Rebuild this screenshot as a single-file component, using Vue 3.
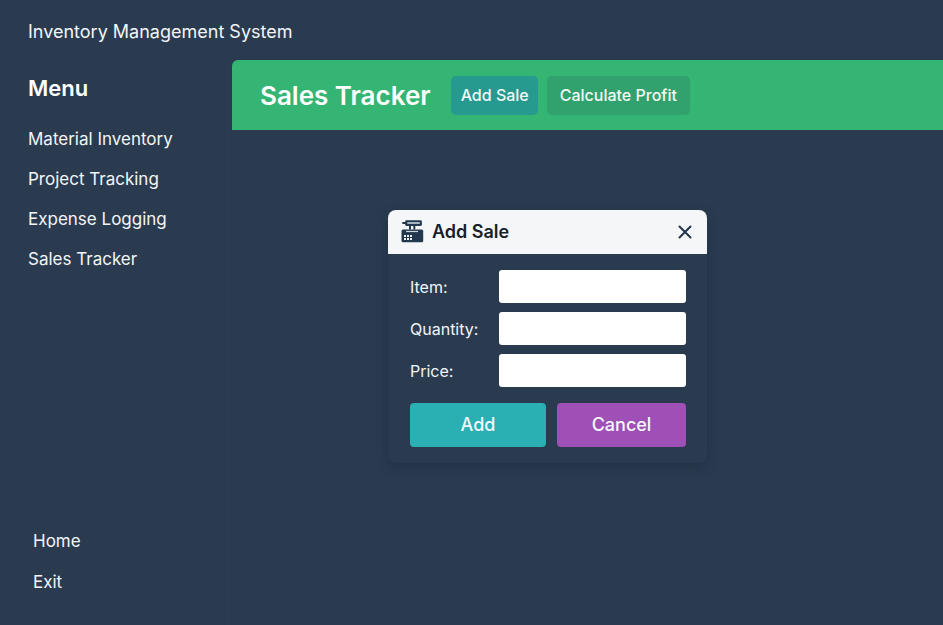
<script setup>
import { ref, reactive } from 'vue'

const menu = ['Material Inventory', 'Project Tracking', 'Expense Logging', 'Sales Tracker']
const footerLinks = ['Home', 'Exit']
const fields = [
  { key: 'item', label: 'Item:', mode: 'text' },
  { key: 'quantity', label: 'Quantity:', mode: 'numeric' },
  { key: 'price', label: 'Price:', mode: 'decimal' },
]
const open = ref(true)
const sale = reactive({ item: '', quantity: '', price: '' })

function close() {
  open.value = false
}
</script>

<template>
  <div class="app">
    <header class="topbar">Inventory Management System</header>
    <div class="shell">
      <aside class="sidebar">
        <h2 class="menu-title">Menu</h2>
        <nav class="menu">
          <a v-for="entry in menu" :key="entry" href="#">{{ entry }}</a>
        </nav>
        <nav class="menu footer-menu">
          <a v-for="entry in footerLinks" :key="entry" href="#">{{ entry }}</a>
        </nav>
      </aside>
      <main class="main">
        <div class="page-head">
          <h1>Sales Tracker</h1>
          <div class="tabs">
            <button type="button" class="tab tab-active" @click="open = true">Add Sale</button>
            <button type="button" class="tab">Calculate Profit</button>
          </div>
        </div>
        <div class="stage">
          <section v-if="open" class="dialog" role="dialog" aria-labelledby="dialog-title">
            <div class="dialog-head">
              <svg class="register" viewBox="0 0 24 24" aria-hidden="true">
                <path d="M3 9.500h18.500q1.700 0 1.700 1.700v9.500q0 1.500-1.500 1.500H3q-1.500 0-1.500-1.500V11Q1.500 9.500 3 9.500z" fill="#22384f" />
                <path d="M6 11.500h12" fill="none" stroke="#cfd7de" stroke-width="1.200" />
                <path d="M9 5.500h2v4H9zM13.300 5.500h2v4h-2z" fill="#22384f" />
                <path d="M2.300 2h2.900V1.500Q5.200.300 6.500.300h14q1.400 0 1.400 1.400v2.900Q21.900 6 20.500 6h-14Q5.200 6 5.200 4.700V4H2.300z" fill="#22384f" />
                <path d="M7.300 2.300h12.500v1.400H7.300z" fill="#dfe5ea" />
                <path d="M4 15h2v2H4zM7 15h2v2H7zM10 15h2v2h-2zM4 18h2v2H4zM7 18h2v2H7zM10 18h2v2h-2z" fill="#eef1f4" />
              </svg>
              <h2 id="dialog-title">Add Sale</h2>
              <button type="button" class="close" aria-label="Close" @click="close">
                <svg viewBox="0 0 14 14" aria-hidden="true">
                  <path d="M1.500 1.500l11 11M12.500 1.500l-11 11" fill="none" stroke="#22364b" stroke-width="2" stroke-linecap="round" />
                </svg>
              </button>
            </div>
            <form class="dialog-body" @submit.prevent="close">
              <div v-for="field in fields" :key="field.key" class="field">
                <label :for="field.key">{{ field.label }}</label>
                <input :id="field.key" v-model="sale[field.key]" type="text" :inputmode="field.mode" />
              </div>
              <div class="actions">
                <button type="submit" class="add">Add</button>
                <button type="button" class="cancel" @click="close">Cancel</button>
              </div>
            </form>
          </section>
        </div>
      </main>
    </div>
  </div>
</template>

<style>
body {
  margin: 0;
  background: #2a3b50;
}
</style>

<style scoped>
.app {
  display: flex;
  flex-direction: column;
  min-height: 100vh;
  background: #2a3b50;
  color: #f3f5f7;
  font-family: Inter, "Liberation Sans", sans-serif;
}
h1,
h2 {
  margin: 0;
  font-weight: 600;
}
button,
input {
  box-sizing: border-box;
  border: 0;
  font-family: inherit;
}
button {
  padding: 0;
  cursor: pointer;
}
.topbar {
  padding: 20px 28px 16px;
  font-size: 18px;
  line-height: 24px;
}
.shell {
  display: flex;
  flex: 1;
}
.sidebar {
  display: flex;
  flex-direction: column;
  box-sizing: border-box;
  flex: 0 0 232px;
  padding: 12px 28px 30px;
  border-right: 1px solid #28384d;
}
.menu-title {
  color: #fff;
  font-size: 22px;
  line-height: 32px;
}
.menu {
  display: flex;
  flex-direction: column;
  gap: 16px;
  padding-top: 23px;
}
.menu a {
  color: inherit;
  font-size: 17px;
  line-height: 24px;
  text-decoration: none;
}
.footer-menu {
  margin-top: auto;
  padding-left: 5px;
}
.footer-menu a {
  line-height: 25px;
}
.main {
  flex: 1;
  min-width: 0;
}
.page-head {
  display: flex;
  align-items: center;
  gap: 20px;
  padding: 16px 28px 15px;
  border-radius: 6px 0 0 0;
  background: #34b574;
}
.page-head h1 {
  color: #fff;
  font-size: 26px;
  line-height: 36px;
}
.tabs {
  display: flex;
  gap: 9px;
}
.tab {
  padding: 0 13px;
  border-radius: 5px;
  background: #31a26d;
  color: #f3f8f6;
  font-size: 16px;
  font-weight: 500;
  line-height: 39px;
}
.tab-active {
  padding: 0 9px 0 10px;
  background: #279a8f;
}
.stage {
  display: flex;
  justify-content: center;
  padding: 80px 80px 80px 0;
}
.dialog {
  width: 319px;
  border-radius: 8px;
  background: #2a3b50;
  box-shadow: 0 4px 12px rgba(15, 28, 42, 0.28);
}
.dialog-head {
  display: flex;
  align-items: center;
  gap: 8px;
  padding: 0 14px 0 12px;
  border-radius: 8px 8px 0 0;
  background: #f5f6f8;
}
.register {
  width: 24px;
  height: 24px;
}
.dialog-head h2 {
  flex: 1;
  color: #17212c;
  font-size: 18px;
  line-height: 44px;
}
.close {
  display: flex;
  padding: 1px;
  background: none;
}
.close svg {
  width: 14px;
  height: 14px;
}
.dialog-body {
  display: flex;
  flex-direction: column;
  gap: 9px;
  padding: 16px 21px 16px 22px;
}
.field {
  display: grid;
  grid-template-columns: 89px 1fr;
  align-items: center;
}
.field label {
  font-size: 16px;
  line-height: 24px;
}
.field input {
  width: 100%;
  height: 33px;
  padding: 0 8px;
  border-radius: 3px;
  background: #fff;
  color: #17212c;
  font-size: 16px;
}
.actions {
  display: grid;
  grid-template-columns: 136fr 129fr;
  gap: 11px;
  margin-top: 7px;
}
.actions button {
  border-radius: 4px;
  color: #f6f8fa;
  font-size: 18px;
  font-weight: 500;
  line-height: 44px;
}
.add {
  background: #2aafb2;
}
.cancel {
  background: #9e50b6;
}
</style>
